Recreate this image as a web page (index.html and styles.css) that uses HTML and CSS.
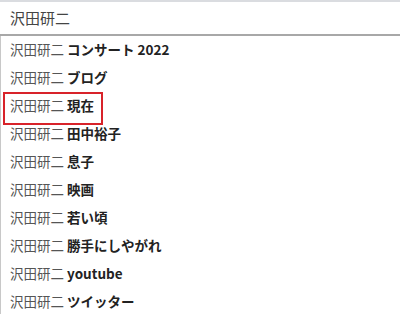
FILE: index.html
```html
<!DOCTYPE html>
<html lang="ja">
<head>
    <meta charset="UTF-8">
    <title>沢田研二</title>
    <link rel="stylesheet" href="styles.css">
</head>
<body>

<div class="search-box">
    <div class="search-input">沢田研二</div>
    <ul class="suggest-list">
        <li class="suggest-item"><span class="query">沢田研二</span> <b>コンサート 2022</b></li>
        <li class="suggest-item"><span class="query">沢田研二</span> <b>ブログ</b></li>
        <li class="suggest-item marked"><span class="query">沢田研二</span> <b>現在</b></li>
        <li class="suggest-item"><span class="query">沢田研二</span> <b>田中裕子</b></li>
        <li class="suggest-item"><span class="query">沢田研二</span> <b>息子</b></li>
        <li class="suggest-item"><span class="query">沢田研二</span> <b>映画</b></li>
        <li class="suggest-item"><span class="query">沢田研二</span> <b>若い頃</b></li>
        <li class="suggest-item"><span class="query">沢田研二</span> <b>勝手にしやがれ</b></li>
        <li class="suggest-item"><span class="query">沢田研二</span> <b>youtube</b></li>
        <li class="suggest-item"><span class="query">沢田研二</span> <b>ツイッター</b></li>
    </ul>
</div>

</body>
</html>
```

FILE: styles.css
```css
body {
    margin: 0;
    background: #fff;
    font-family: "Noto Sans CJK JP", "Noto Sans", sans-serif;
    color: #333;
}

.search-box {
    width: 400px;
}

.search-input {
    height: 32px;
    border-top: 2px solid #dadce0;
    border-bottom: 2px solid #a8a8a8;
    padding-left: 10px;
    font-size: 15px;
    line-height: 32px;
    color: #444;
}

.suggest-list {
    list-style: none;
    margin: 0;
    padding: 0;
    border-left: 1px solid #c8c8c8;
}

.suggest-item {
    position: relative;
    height: 28px;
    line-height: 27px;
    padding-left: 9px;
    font-size: 13.5px;
    white-space: nowrap;
}

.suggest-item .query {
    color: #555;
}

.suggest-item b {
    color: #222;
    font-weight: bold;
}

/* 赤枠の注釈 */
.suggest-item.marked::after {
    content: "";
    position: absolute;
    left: 2px;
    top: 0;
    width: 96px;
    height: 29px;
    border: 2px solid #d8232a;
}
```
